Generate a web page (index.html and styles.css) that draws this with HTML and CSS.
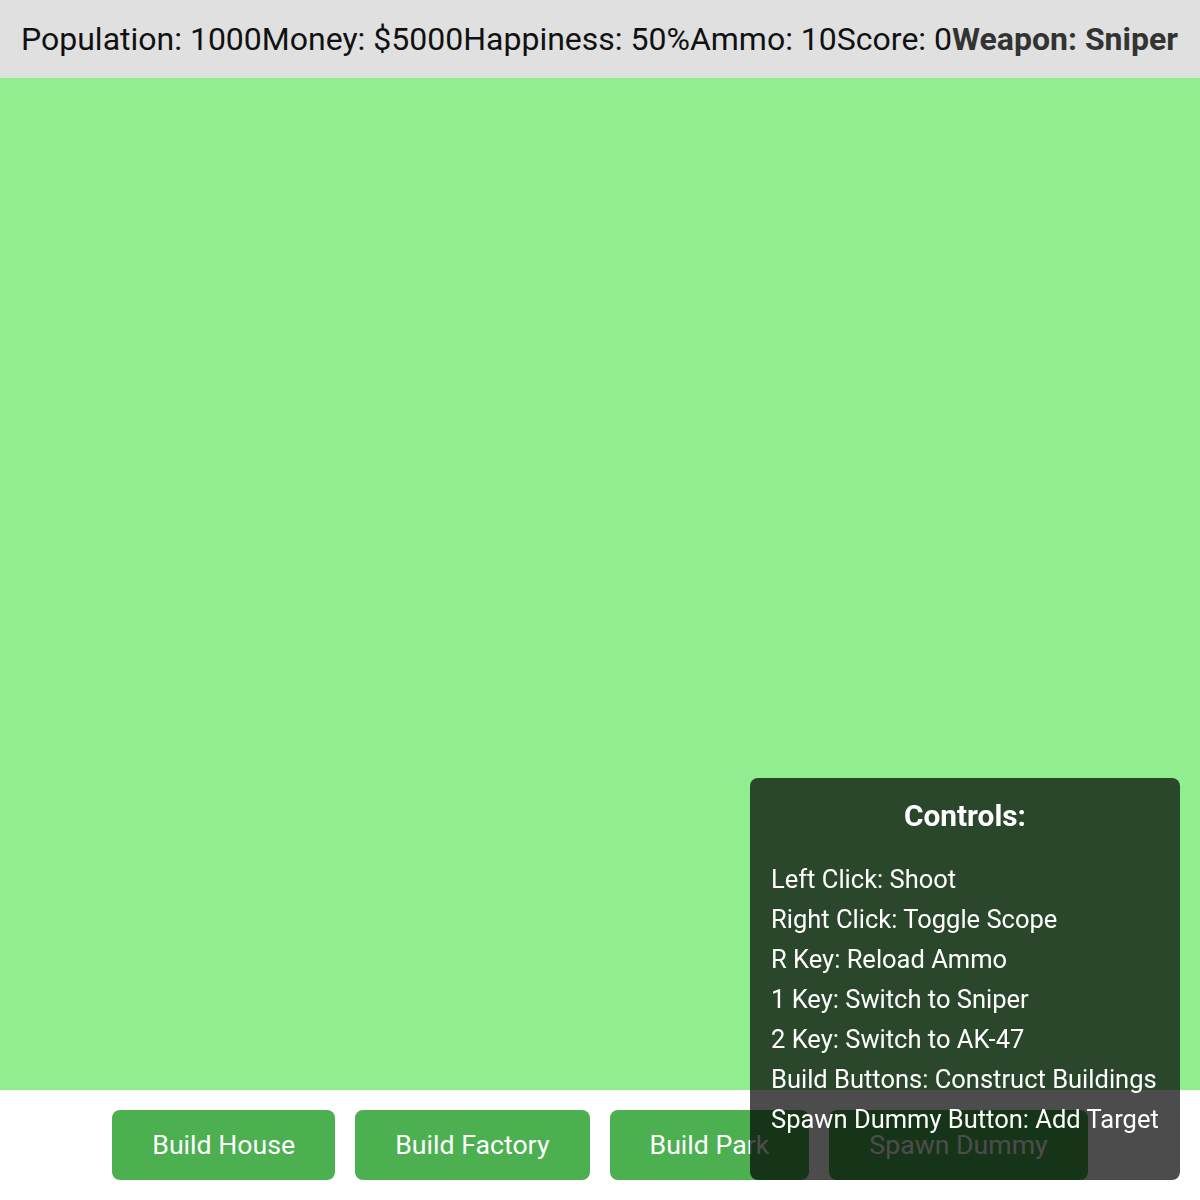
FILE: index.html
```html
<!DOCTYPE html>
<html lang="en">
<head>
<meta charset="utf-8">
<title>City Sniper</title>
<link rel="stylesheet" href="styles.css">
</head>
<body>
<header class="stats">
  <span class="stat">Population: 1000</span><span class="stat">Money: $5000</span><span class="stat">Happiness: 50%</span><span class="stat">Ammo: 10</span><span class="stat">Score: 0</span><span class="stat weapon">Weapon: Sniper</span>
</header>
<main class="field"></main>
<footer class="actions">
  <button class="btn">Build House</button>
  <button class="btn">Build Factory</button>
  <button class="btn">Build Park</button>
  <button class="btn">Spawn Dummy</button>
</footer>
<aside class="controls">
  <h3 class="controls-title">Controls:</h3>
  <p class="controls-item">Left Click: Shoot</p>
  <p class="controls-item">Right Click: Toggle Scope</p>
  <p class="controls-item">R Key: Reload Ammo</p>
  <p class="controls-item">1 Key: Switch to Sniper</p>
  <p class="controls-item">2 Key: Switch to AK-47</p>
  <p class="controls-item">Build Buttons: Construct Buildings</p>
  <p class="controls-item">Spawn Dummy Button: Add Target</p>
</aside>
</body>
</html>
```
FILE: styles.css
```css
html, body {
  margin: 0;
  padding: 0;
  background: #ffffff;
  font-family: Roboto, "Liberation Sans", Arial, sans-serif;
  overflow: hidden;
}

.stats {
  display: flex;
  align-items: center;
  height: 78px;
  padding: 0 21px;
  background: #e0e0e0;
  color: #111;
  font-size: 32px;
  white-space: nowrap;
}

.weapon {
  font-weight: bold;
  color: #333;
}

.field {
  display: block;
  height: 1012px;
  background: #90ee90;
}

.actions {
  display: flex;
  justify-content: center;
  gap: 20px;
  padding: 20px 0;
}

.btn {
  padding: 20px 40px;
  border: none;
  border-radius: 8px;
  background: #4caf50;
  color: #ffffff;
  font-family: Roboto, "Liberation Sans", Arial, sans-serif;
  font-size: 26.7px;
  line-height: 30px;
}

.controls {
  position: fixed;
  right: 20px;
  bottom: 20px;
  width: 388px;
  padding: 20px 21px 41px;
  border-radius: 8px;
  background: rgba(0, 0, 0, 0.7);
  color: #ffffff;
}

.controls-title {
  margin: 0 0 25px;
  font-size: 29.8px;
  line-height: 36px;
  font-weight: bold;
  text-align: center;
}

.controls-item {
  margin: 0;
  font-size: 25.5px;
  line-height: 40px;
  white-space: nowrap;
}
```
